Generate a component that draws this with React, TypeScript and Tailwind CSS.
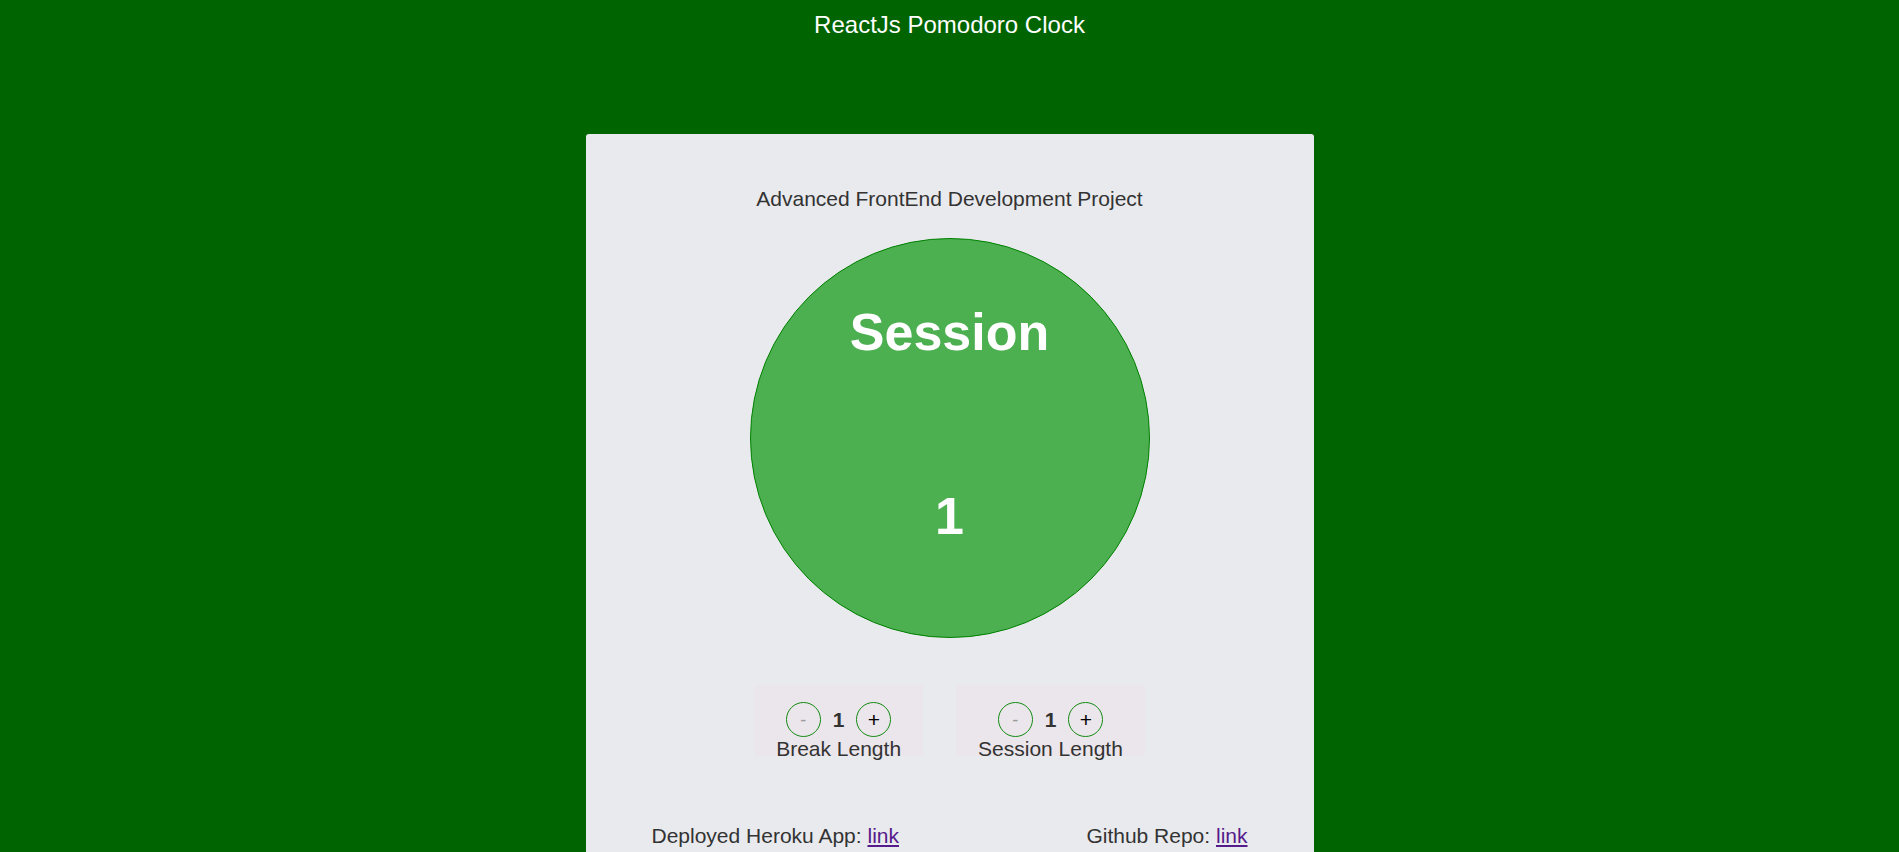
import { useState } from 'react';

function LengthControl({
  label,
  value,
  onDec,
  onInc,
}: {
  label: string;
  value: number;
  onDec: () => void;
  onInc: () => void;
}) {
  return (
    <div className="h-[71px] px-[22px] pt-[17px] bg-[#ebe6eb] flex flex-col items-center">
      <div className="flex items-center gap-[12px] h-[36px]">
        <button
          onClick={onDec}
          className="w-[35px] h-[35px] rounded-full border border-[#138a13] bg-transparent text-[#9a9a9a] text-[18px] leading-none flex items-center justify-center"
        >
          -
        </button>
        <span className="text-[21px] font-bold text-[#333]">{value}</span>
        <button
          onClick={onInc}
          className="w-[35px] h-[35px] rounded-full border border-[#138a13] bg-transparent text-black text-[21px] leading-none flex items-center justify-center"
        >
          +
        </button>
      </div>
      <span className="text-[21px] leading-[24px] text-[#333] whitespace-nowrap">{label}</span>
    </div>
  );
}

export default function App() {
  const [breakLength, setBreakLength] = useState(1);
  const [sessionLength, setSessionLength] = useState(1);

  return (
    <div className="min-h-screen bg-[#006400] font-['Liberation_Sans',Arial,sans-serif] pb-10">
      <div className="pt-[11px] text-center text-white text-[24px] leading-[28px]">
        ReactJs Pomodoro Clock
      </div>

      <div className="w-[728px] mx-auto mt-[95px] bg-[#e9eaee] rounded-[3px] pt-[53px] pb-[60px] flex flex-col items-center">
        <p className="text-[21px] leading-[24px] text-[#333]">Advanced FrontEnd Development Project</p>

        {/* timer circle */}
        <div className="mt-[27px] w-[400px] h-[400px] rounded-full bg-[#4caf50] border-[1.5px] border-[#008000] flex flex-col items-center pt-[63px] text-white font-bold">
          <div className="text-[52px] leading-[60px]">Session</div>
          <div className="mt-[124px] text-[52px] leading-[60px]">{sessionLength}</div>
        </div>

        <div className="mt-[47px] flex gap-[33px]">
          <LengthControl
            label="Break Length"
            value={breakLength}
            onDec={() => setBreakLength((v) => Math.max(1, v - 1))}
            onInc={() => setBreakLength((v) => Math.min(60, v + 1))}
          />
          <LengthControl
            label="Session Length"
            value={sessionLength}
            onDec={() => setSessionLength((v) => Math.max(1, v - 1))}
            onInc={() => setSessionLength((v) => Math.min(60, v + 1))}
          />
        </div>

        <div className="mt-[68px] w-full px-[66px] flex justify-between text-[21px] leading-[24px] text-[#333]">
          <span>
            Deployed Heroku App: <a href="#" className="text-[#551a8b] underline">link</a>
          </span>
          <span>
            Github Repo: <a href="#" className="text-[#551a8b] underline">link</a>
          </span>
        </div>
      </div>
    </div>
  );
}
